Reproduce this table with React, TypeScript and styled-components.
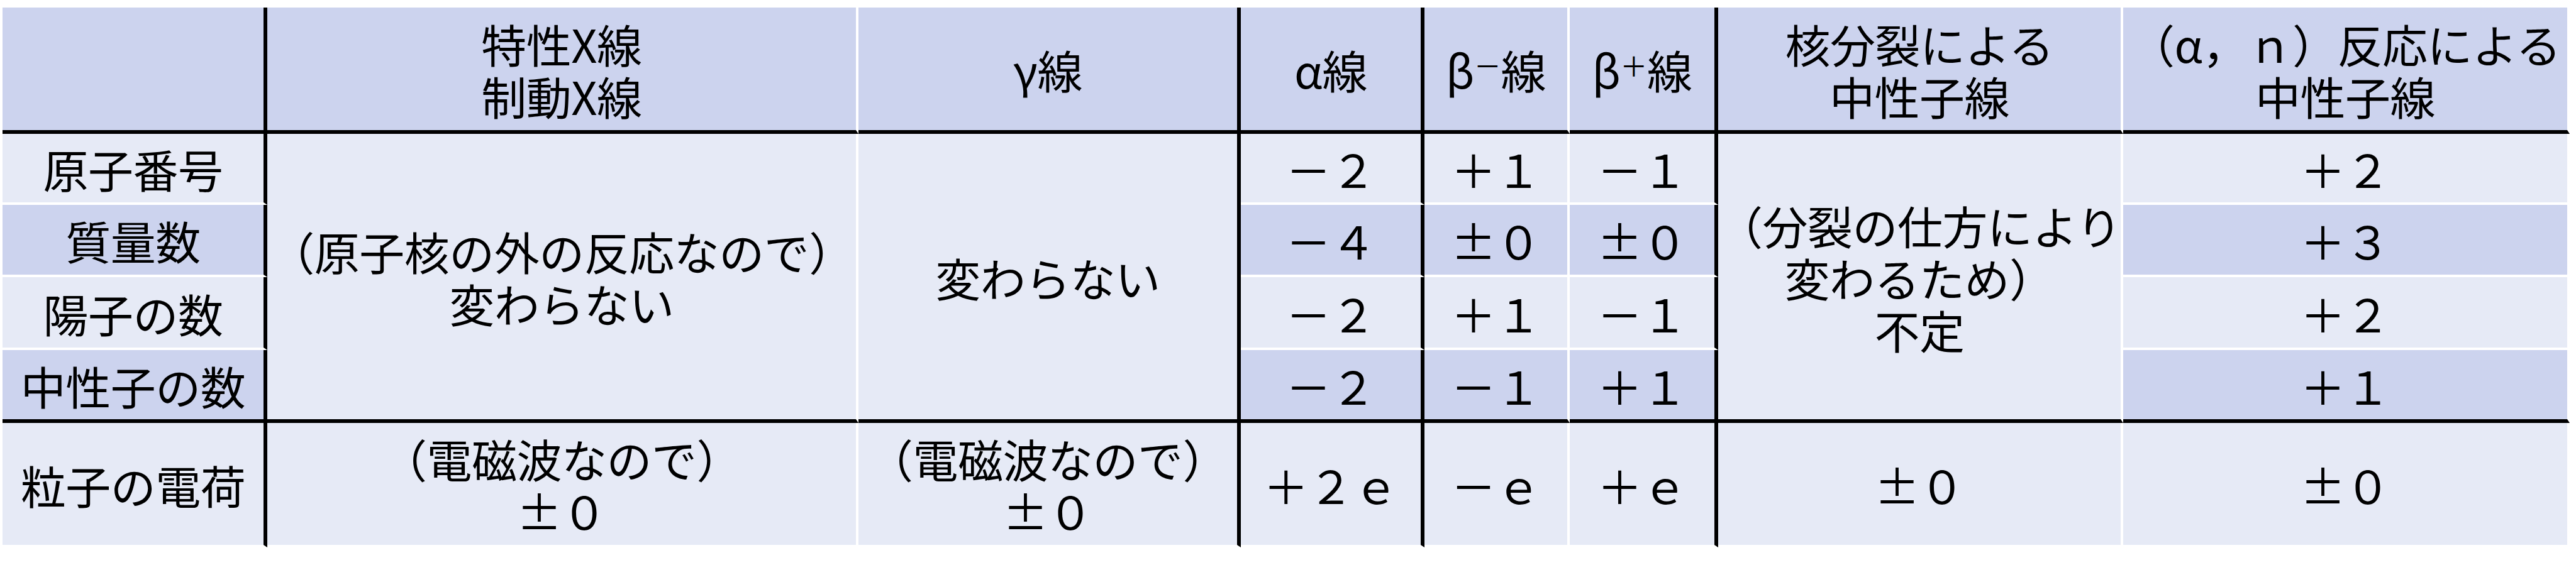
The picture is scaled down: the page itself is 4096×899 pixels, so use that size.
import React from 'react';
import styled, { createGlobalStyle } from 'styled-components';

const GlobalStyle = createGlobalStyle`
  html, body {
    margin: 0;
    padding: 0;
    background: #ffffff;
  }
  body {
    font-family: "Noto Sans CJK JP", "Noto Sans", sans-serif;
    color: #000000;
  }
`;

const DARK = '#ccd3ee';
const LIGHT = '#e6eaf6';
const WHITE_LINE = '4px solid #ffffff';
const BLACK_LINE = '6px solid #000000';

const Page = styled.div`
  padding: 12px 0 0 4px;
`;

const Table = styled.div`
  display: grid;
  grid-template-columns: 421px 940px 608px 292px 231px 236px 644px 710px;
  grid-template-rows: 201px 113px 115px 116px 116px 198px;
  width: 4082px;
`;

interface CellProps {
  $c: number;
  $r: number;
  $rs?: number;
  $dark?: boolean;
  $rb?: boolean;
  $bb?: boolean;
}

const Cell = styled.div<CellProps>`
  grid-column: ${p => p.$c};
  grid-row: ${p => `${p.$r} / span ${p.$rs ?? 1}`};
  box-sizing: border-box;
  display: flex;
  align-items: center;
  justify-content: center;
  text-align: center;
  background: ${p => (p.$dark ? DARK : LIGHT)};
  border-right: ${p => (p.$rb ? BLACK_LINE : WHITE_LINE)};
  border-bottom: ${p => (p.$bb ? BLACK_LINE : WHITE_LINE)};
  font-size: 72px;
  line-height: 83px;
  letter-spacing: -0.5px;
  white-space: nowrap;
`;

const Sup = styled.span`
  font-size: 0.6em;
  vertical-align: 0.45em;
  line-height: 0;
`;

// 列の右側が黒線かどうか
const blackRight = [true, false, true, true, false, true, false, false];

const header: React.ReactNode[] = [
  '',
  <>特性X線<br />制動X線</>,
  'γ線',
  'α線',
  <>β<Sup>－</Sup>線</>,
  <>β<Sup>＋</Sup>線</>,
  <>核分裂による<br />中性子線</>,
  <>（α，ｎ）反応による<br />中性子線</>,
];

const labels = ['原子番号', '質量数', '陽子の数', '中性子の数'];

// α, β−, β+, (α,n) の各列
const values = [
  ['－２', '＋１', '－１', '＋２'],
  ['－４', '±０', '±０', '＋３'],
  ['－２', '＋１', '－１', '＋２'],
  ['－２', '－１', '＋１', '＋１'],
];

const charge: React.ReactNode[] = [
  '粒子の電荷',
  <>（電磁波なので）<br />±０</>,
  <>（電磁波なので）<br />±０</>,
  '＋２ｅ',
  '－ｅ',
  '＋ｅ',
  '±０',
  '±０',
];

export default function App() {
  return (
    <>
      <GlobalStyle />
      <Page>
        <Table>
          {header.map((h, i) => (
            <Cell key={`h${i}`} $c={i + 1} $r={1} $dark $rb={blackRight[i]} $bb>
              <div>{h}</div>
            </Cell>
          ))}

          {labels.map((l, i) => (
            <Cell key={`l${i}`} $c={1} $r={i + 2} $dark={i % 2 === 1} $rb $bb={i === 3}>
              {l}
            </Cell>
          ))}

          <Cell $c={2} $r={2} $rs={4} $bb>
            <div>（原子核の外の反応なので）<br />変わらない</div>
          </Cell>
          <Cell $c={3} $r={2} $rs={4} $rb $bb>
            変わらない
          </Cell>
          <Cell $c={7} $r={2} $rs={4} $bb>
            <div>（分裂の仕方により<br />変わるため）<br />不定</div>
          </Cell>

          {values.map((row, i) =>
            row.map((v, j) => {
              const col = [4, 5, 6, 8][j];
              return (
                <Cell
                  key={`v${i}-${j}`}
                  $c={col}
                  $r={i + 2}
                  $dark={i % 2 === 1}
                  $rb={blackRight[col - 1]}
                  $bb={i === 3}
                >
                  {v}
                </Cell>
              );
            })
          )}

          {charge.map((v, i) => (
            <Cell key={`c${i}`} $c={i + 1} $r={6} $rb={blackRight[i]}>
              <div>{v}</div>
            </Cell>
          ))}
        </Table>
      </Page>
    </>
  );
}
